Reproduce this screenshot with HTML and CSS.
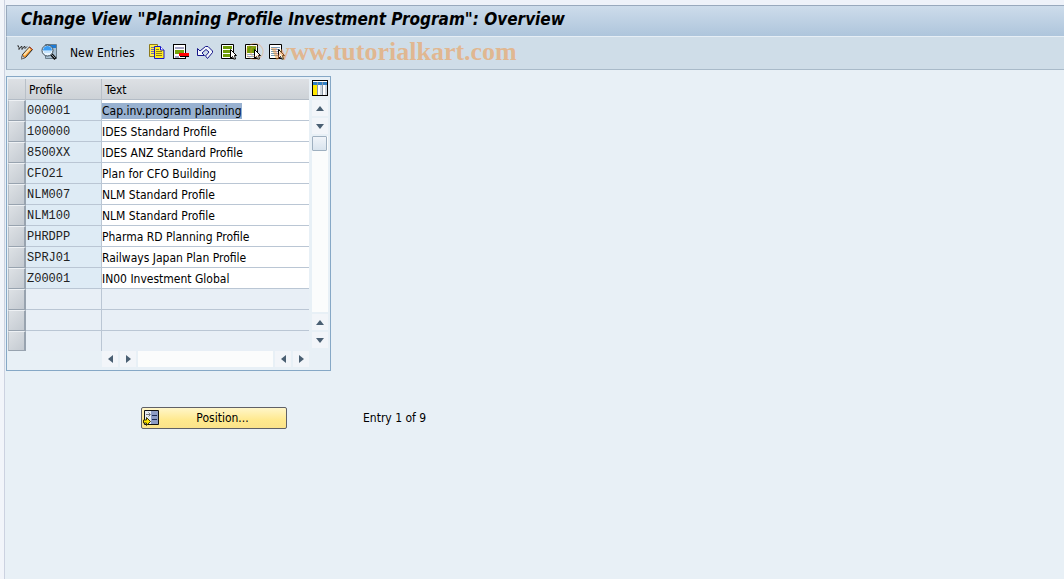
FILE: index.html
```html
<!DOCTYPE html>
<html lang="en">
<head>
  <meta charset="UTF-8">
  <meta name="viewport" content="width=device-width, initial-scale=1.0">
  <title>Change View "Planning Profile Investment Program": Overview</title>
  <link rel="stylesheet" href="styles.css">
</head>
<body>

<div class="window">
  <h1 class="title">Change View "Planning Profile Investment Program": Overview</h1>

  <!-- toolbar -->
  <div class="toolbar">
    <button class="tool" aria-label="Display / Change">
      <svg width="16" height="16" viewBox="0 0 16 16">
        <path d="M0 2.500l1-1 1 2v2l2-3h1v3l2-3h1v2l2-2" fill="none" stroke="#333"/>
        <path d="M5.500 10.500L12.500 3l3 2.500-7 8-4 1.500z" fill="#f79a2b" stroke="#222"/>
        <path d="M7 11l6-6.500" stroke="#ffe0a8" stroke-width="2"/>
        <path d="M12.500 3l3 2.500" stroke="#c8462c"/>
        <path d="M5.500 11.500l2 2-3 1.500z" fill="#fff" stroke="#777"/>
      </svg>
    </button>
    <button class="tool" aria-label="Details">
      <svg width="16" height="16" viewBox="0 0 16 16">
        <path d="M4.500 .5h11v14h-11z" fill="#a9c0d2" stroke="#6c7f8c"/>
        <path d="M5 1h10v3H5z" fill="#1d7ad4"/>
        <circle cx="6.500" cy="6.500" r="5.500" fill="#eaf6ff" stroke="#3b4a55"/>
        <path d="M2 6.500a4.500 4.500 0 0 1 9 0z" fill="#3b9cf2"/>
        <path d="M3 8h7" stroke="#9fd0f8"/>
        <path d="M10.500 10.500l4 4.500" stroke="#111" stroke-width="3"/>
        <path d="M10.500 10.500l3.500 3.500" stroke="#8ea0ac"/>
      </svg>
    </button>
    <button class="tool tool-text">New Entries</button>
    <button class="tool" aria-label="Copy As">
      <svg width="16" height="16" viewBox="0 0 16 16">
        <path d="M.5 .5h8v12h-8z" fill="#ffee4a" stroke="#8d7a1c"/>
        <path d="M2 3.500h4M2 5.500h4M2 7.500h4M2 9.500h4" stroke="#6d6ba8"/>
        <path d="M5.500 2.500h6l3.500 3.500v8.500H5.500z" fill="#ffec1f" stroke="#1414c8"/>
        <path d="M11.500 2.500V6H15" fill="#fff" stroke="#1414c8"/>
        <path d="M7 5.500h3M7 7.500h6M7 9.500h6M7 11.500h6" stroke="#8d7a1c"/>
      </svg>
    </button>
    <button class="tool" aria-label="Delete">
      <svg width="16" height="16" viewBox="0 0 16 16" shape-rendering="crispEdges">
        <path d="M.5 .5h12v14H.5z" fill="#fff" stroke="#000"/>
        <path d="M2 3.500h9M2 12.500h4" stroke="#a3a3c4" stroke-width="2"/>
        <path d="M2 6h9v4H2z" fill="#76a30c"/>
        <path d="M7 9h9v4H7z" fill="#000"/>
        <path d="M6 9h10v3H6z" fill="#f00"/>
      </svg>
    </button>
    <button class="tool" aria-label="Undo Change">
      <svg width="16" height="16" viewBox="0 0 16 16">
        <path d="M.5 4.500v7h7L5 9l4-3.500L12 8l-3.500 4 2 2.500 5-6V7L11 2.500H8.500L3 7z" fill="#f2f6fb" stroke="#17178a"/>
      </svg>
    </button>
    <button class="tool" aria-label="Select All">
      <svg width="16" height="16" viewBox="0 0 16 16">
        <path d="M.5 .5h12v14H.5z" fill="#fff" stroke="#000"/>
        <path d="M2 2h9v3H2zM2 6h9v3H2zM2 10h9v3H2z" fill="#6f9c08"/>
        <path d="M9.500 5.500v9l2-2 1 2.500h2l-1-3.500h2z" fill="#fff" stroke="#000"/>
      </svg>
    </button>
    <button class="tool" aria-label="Select Block">
      <svg width="16" height="16" viewBox="0 0 16 16">
        <path d="M.5 .5h12v14H.5z" fill="#fff" stroke="#000"/>
        <path d="M2 2h9v7H2z" fill="#6f9c08"/>
        <path d="M2 10.500h7M2 12.500h7" stroke="#8fa9c0"/>
        <path d="M9.500 5.500v9l2-2 1 2.500h2l-1-3.500h2z" fill="#fff" stroke="#000"/>
      </svg>
    </button>
    <button class="tool" aria-label="Deselect All">
      <svg width="16" height="16" viewBox="0 0 16 16">
        <path d="M.5 .5h12v14H.5z" fill="#fff" stroke="#000"/>
        <path d="M2 3.500h9M2 5.500h9M2 7.500h7M2 9.500h7M2 11.500h7" stroke="#7c9bb5"/>
        <path d="M9.500 5.500v9l2-2 1 2.500h2l-1-3.500h2z" fill="#fff" stroke="#000"/>
      </svg>
    </button>
    <span class="watermark"><span class="copyright">©</span> www.tutorialkart.com</span>
  </div>

  <div class="content">
    <div class="table-control">
      <table class="grid">
        <thead>
        <tr>
          <th class="col-select"></th>
          <th class="col-profile">Profile</th>
          <th class="col-text">Text</th>
        </tr>
        </thead>
        <tbody>
        <tr>
          <td class="select"><button aria-label="Select 000001"></button></td>
          <td class="key">000001</td>
          <td class="value"><input class="marked" type="text" aria-label="Text 000001" value="Cap.inv.program planning"></td>
        </tr>
        <tr>
          <td class="select"><button aria-label="Select 100000"></button></td>
          <td class="key">100000</td>
          <td class="value"><input type="text" aria-label="Text 100000" value="IDES Standard Profile"></td>
        </tr>
        <tr>
          <td class="select"><button aria-label="Select 8500XX"></button></td>
          <td class="key">8500XX</td>
          <td class="value"><input type="text" aria-label="Text 8500XX" value="IDES ANZ Standard Profile"></td>
        </tr>
        <tr>
          <td class="select"><button aria-label="Select CFO21"></button></td>
          <td class="key">CFO21</td>
          <td class="value"><input type="text" aria-label="Text CFO21" value="Plan for CFO Building"></td>
        </tr>
        <tr>
          <td class="select"><button aria-label="Select NLM007"></button></td>
          <td class="key">NLM007</td>
          <td class="value"><input type="text" aria-label="Text NLM007" value="NLM Standard Profile"></td>
        </tr>
        <tr>
          <td class="select"><button aria-label="Select NLM100"></button></td>
          <td class="key">NLM100</td>
          <td class="value"><input type="text" aria-label="Text NLM100" value="NLM Standard Profile"></td>
        </tr>
        <tr>
          <td class="select"><button aria-label="Select PHRDPP"></button></td>
          <td class="key">PHRDPP</td>
          <td class="value"><input type="text" aria-label="Text PHRDPP" value="Pharma RD Planning Profile"></td>
        </tr>
        <tr>
          <td class="select"><button aria-label="Select SPRJ01"></button></td>
          <td class="key">SPRJ01</td>
          <td class="value"><input type="text" aria-label="Text SPRJ01" value="Railways Japan Plan Profile"></td>
        </tr>
        <tr>
          <td class="select"><button aria-label="Select Z00001"></button></td>
          <td class="key">Z00001</td>
          <td class="value"><input type="text" aria-label="Text Z00001" value="IN00 Investment Global"></td>
        </tr>
        <tr class="empty">
          <td class="select"><button aria-label="Select row 10"></button></td>
          <td class="key"></td>
          <td class="value"></td>
        </tr>
        <tr class="empty">
          <td class="select"><button aria-label="Select row 11"></button></td>
          <td class="key"></td>
          <td class="value"></td>
        </tr>
        <tr class="empty">
          <td class="select"><button aria-label="Select row 12"></button></td>
          <td class="key"></td>
          <td class="value"></td>
        </tr>
        </tbody>
      </table>

      <!-- vertical scrollbar -->
      <div class="vscroll">
        <button class="config" aria-label="Configuration">
          <svg width="16" height="16" viewBox="0 0 16 16" shape-rendering="crispEdges">
            <path d="M.5 .5h15v15H.5z" fill="#fff" stroke="#000"/>
            <path d="M1 5h4v10H1z" fill="#ffe800"/>
            <path d="M1 2h14v3H1z" fill="#2f7fc4"/>
            <path d="M5.500 2v13M10.500 2v13" stroke="#8796a5"/>
            <path d="M8 5h2v10H8zM13 5h2v10h-2z" fill="#cfd8e0"/>
          </svg>
        </button>
        <button class="arrow" aria-label="Scroll up"><svg width="8" height="5" viewBox="0 0 8 5"><path d="M0 5l4-5 4 5z"/></svg></button>
        <button class="arrow" aria-label="Page up"><svg width="8" height="5" viewBox="0 0 8 5"><path d="M0 0l4 5 4-5z"/></svg></button>
        <div class="track"><button class="thumb" aria-label="Scroll position"></button></div>
        <button class="arrow" aria-label="Page down"><svg width="8" height="5" viewBox="0 0 8 5"><path d="M0 5l4-5 4 5z"/></svg></button>
        <button class="arrow" aria-label="Scroll down"><svg width="8" height="5" viewBox="0 0 8 5"><path d="M0 0l4 5 4-5z"/></svg></button>
      </div>

      <!-- horizontal scrollbar -->
      <div class="hscroll">
        <button class="arrow" aria-label="Scroll left"><svg width="5" height="8" viewBox="0 0 5 8"><path d="M5 0L0 4l5 4z"/></svg></button>
        <button class="arrow" aria-label="Page left"><svg width="5" height="8" viewBox="0 0 5 8"><path d="M0 0l5 4-5 4z"/></svg></button>
        <div class="track"></div>
        <button class="arrow" aria-label="Page right"><svg width="5" height="8" viewBox="0 0 5 8"><path d="M5 0L0 4l5 4z"/></svg></button>
        <button class="arrow" aria-label="Scroll right"><svg width="5" height="8" viewBox="0 0 5 8"><path d="M0 0l5 4-5 4z"/></svg></button>
      </div>
    </div>

    <div class="footer">
      <button class="position">
        <svg width="16" height="16" viewBox="0 0 16 16">
          <path d="M1.500 .5h14v14h-14z" fill="#e6ecf2" stroke="#111"/>
          <path d="M8 1h7v13H8z" fill="#8d9cc4"/>
          <path d="M9 5.500h5M9 9.500h5" stroke="#1b2a55"/>
          <path d="M3 4.500h4M5.500 2.500l2 2-2 2" fill="none" stroke="#777"/>
          <path d="M.5 10h3V7.500l4 4-4 4V13h-3z" fill="#ffe600" stroke="#3d3500"/>
        </svg>
        <span>Position...</span>
      </button>
      <span class="entry">Entry 1 of 9</span>
    </div>
  </div>
</div>

</body>
</html>
```
FILE: styles.css
```css
* {
  box-sizing: border-box;
}
body {
  margin: 0;
  background-color: #f2f5fa;
  font-family: "DejaVu Sans Condensed", "Noto Sans", sans-serif;
  font-size: 12px;
  color: #000;
}
button, input {
  font: inherit;
  color: inherit;
  margin: 0;
  padding: 0;
  border: none;
  background: none;
}
svg {
  display: block;
}
.window {
  min-height: 100vh;
  margin-left: 4px;
  padding: 5px 0 0 1px;
  border-left: 1px solid #ccd2e0;
  background: linear-gradient(#eef2f9 5px, #e8f0f6 5px);
}
.title {
  height: 32px;
  margin: 0;
  padding-left: 14px;
  border-top: 1px solid #98a9bd;
  border-left: 1px solid #98a9bd;
  border-bottom: 1px solid #e6eef5;
  background: linear-gradient(#cddceb, #aec5dc);
  font-size: 17px;
  font-style: italic;
  font-weight: bold;
  line-height: 26px;
  white-space: nowrap;
}
.toolbar {
  position: relative;
  display: flex;
  align-items: center;
  gap: 8px;
  height: 33px;
  padding: 0 0 2px 10px;
  border-left: 1px solid #98a9bd;
  border-bottom: 1px solid #a9bac9;
  background-color: #cfdde8;
}
.tool {
  flex: none;
}
.tool-text {
  width: 76px;
  padding: 2px 0 0 5px;
  text-align: left;
  white-space: nowrap;
}
.watermark {
  position: absolute;
  left: 238px;
  top: 0;
  color: rgba(240, 150, 70, 0.55);
  font-family: "Liberation Serif", serif;
  font-size: 26px;
  font-weight: bold;
  line-height: 30px;
  white-space: nowrap;
  pointer-events: none;
}
.copyright {
  color: rgba(240, 150, 70, 0.4);
  font-weight: normal;
}
.content {
  padding-top: 6px;
}

/* table control */
.table-control {
  display: grid;
  grid-template-columns: 301px 16px;
  column-gap: 3px;
  width: 325px;
  padding: 2px 1px 3px;
  border: 1px solid #86a8c6;
}
.grid {
  width: 100%;
  border-collapse: separate;
  border-spacing: 0;
  table-layout: fixed;
}
th {
  height: 21px;
  padding: 1px 0 0 3px;
  border-right: 1px solid #b9c0c8;
  border-bottom: 1px solid #b3bcc6;
  background: linear-gradient(#dde0e4, #cdd2d7);
  font-weight: normal;
  text-align: left;
}
.col-select {
  width: 18px;
}
.col-profile {
  width: 76px;
}
th.col-text {
  border-right: none;
}
td {
  height: 21px;
  padding: 0;
}
.select button {
  display: block;
  width: 18px;
  height: 21px;
  border-style: solid;
  border-width: 1px 2px 1px 1px;
  border-color: #eef1f4 #98a3af #98a3af #b4bcc5;
  background: linear-gradient(135deg, #dde1e5, #c4cad1);
}
.key {
  padding: 2px 0 0 1px;
  border-right: 1px solid #bac6d4;
  border-bottom: 1px solid #bac6d4;
  background-color: #deebf5;
  color: #222;
  font-family: "Liberation Mono", monospace;
}
.value {
  padding-top: 2px;
  border-bottom: 1px solid #bac6d4;
  background-color: #fff;
}
.value input {
  display: block;
  width: 100%;
  height: 16px;
}
.value .marked {
  width: auto;
  field-sizing: content;
  background-color: #98b1d0;
}
.empty .key,
.empty .value {
  background-color: #e8eff6;
}
.empty:last-child td {
  height: 20px;
  border-bottom: none;
}
.empty:last-child button {
  height: 20px;
}

/* scrollbars */
.vscroll {
  display: flex;
  flex-direction: column;
  gap: 2px;
  padding-bottom: 3px;
}
.config {
  margin: 1px 0 2px;
}
.arrow {
  display: flex;
  flex: none;
  align-items: center;
  justify-content: center;
  width: 16px;
  height: 16px;
  background-color: #f2f5f9;
}
.arrow svg {
  fill: #4a5f72;
}
.track {
  flex: 1;
  background-color: #fbfcfc;
}
.thumb {
  display: block;
  width: 15px;
  height: 15px;
  border: 1px solid #9fb0c0;
  border-radius: 1px;
  background: linear-gradient(#f0f4f9, #d9e4ee);
}
.hscroll {
  display: flex;
  gap: 2px;
  height: 16px;
  margin-left: 94px;
}

/* footer */
.footer {
  display: flex;
  align-items: center;
  gap: 76px;
  margin: 36px 0 0 135px;
}
.position {
  display: flex;
  align-items: center;
  width: 146px;
  height: 22px;
  padding-left: 1px;
  border: 1px solid #5f6066;
  border-radius: 2px;
  background: linear-gradient(#fff6c9, #ffe98e 60%, #fbe38a);
}
.position span {
  flex: 1;
  text-align: center;
}
```
